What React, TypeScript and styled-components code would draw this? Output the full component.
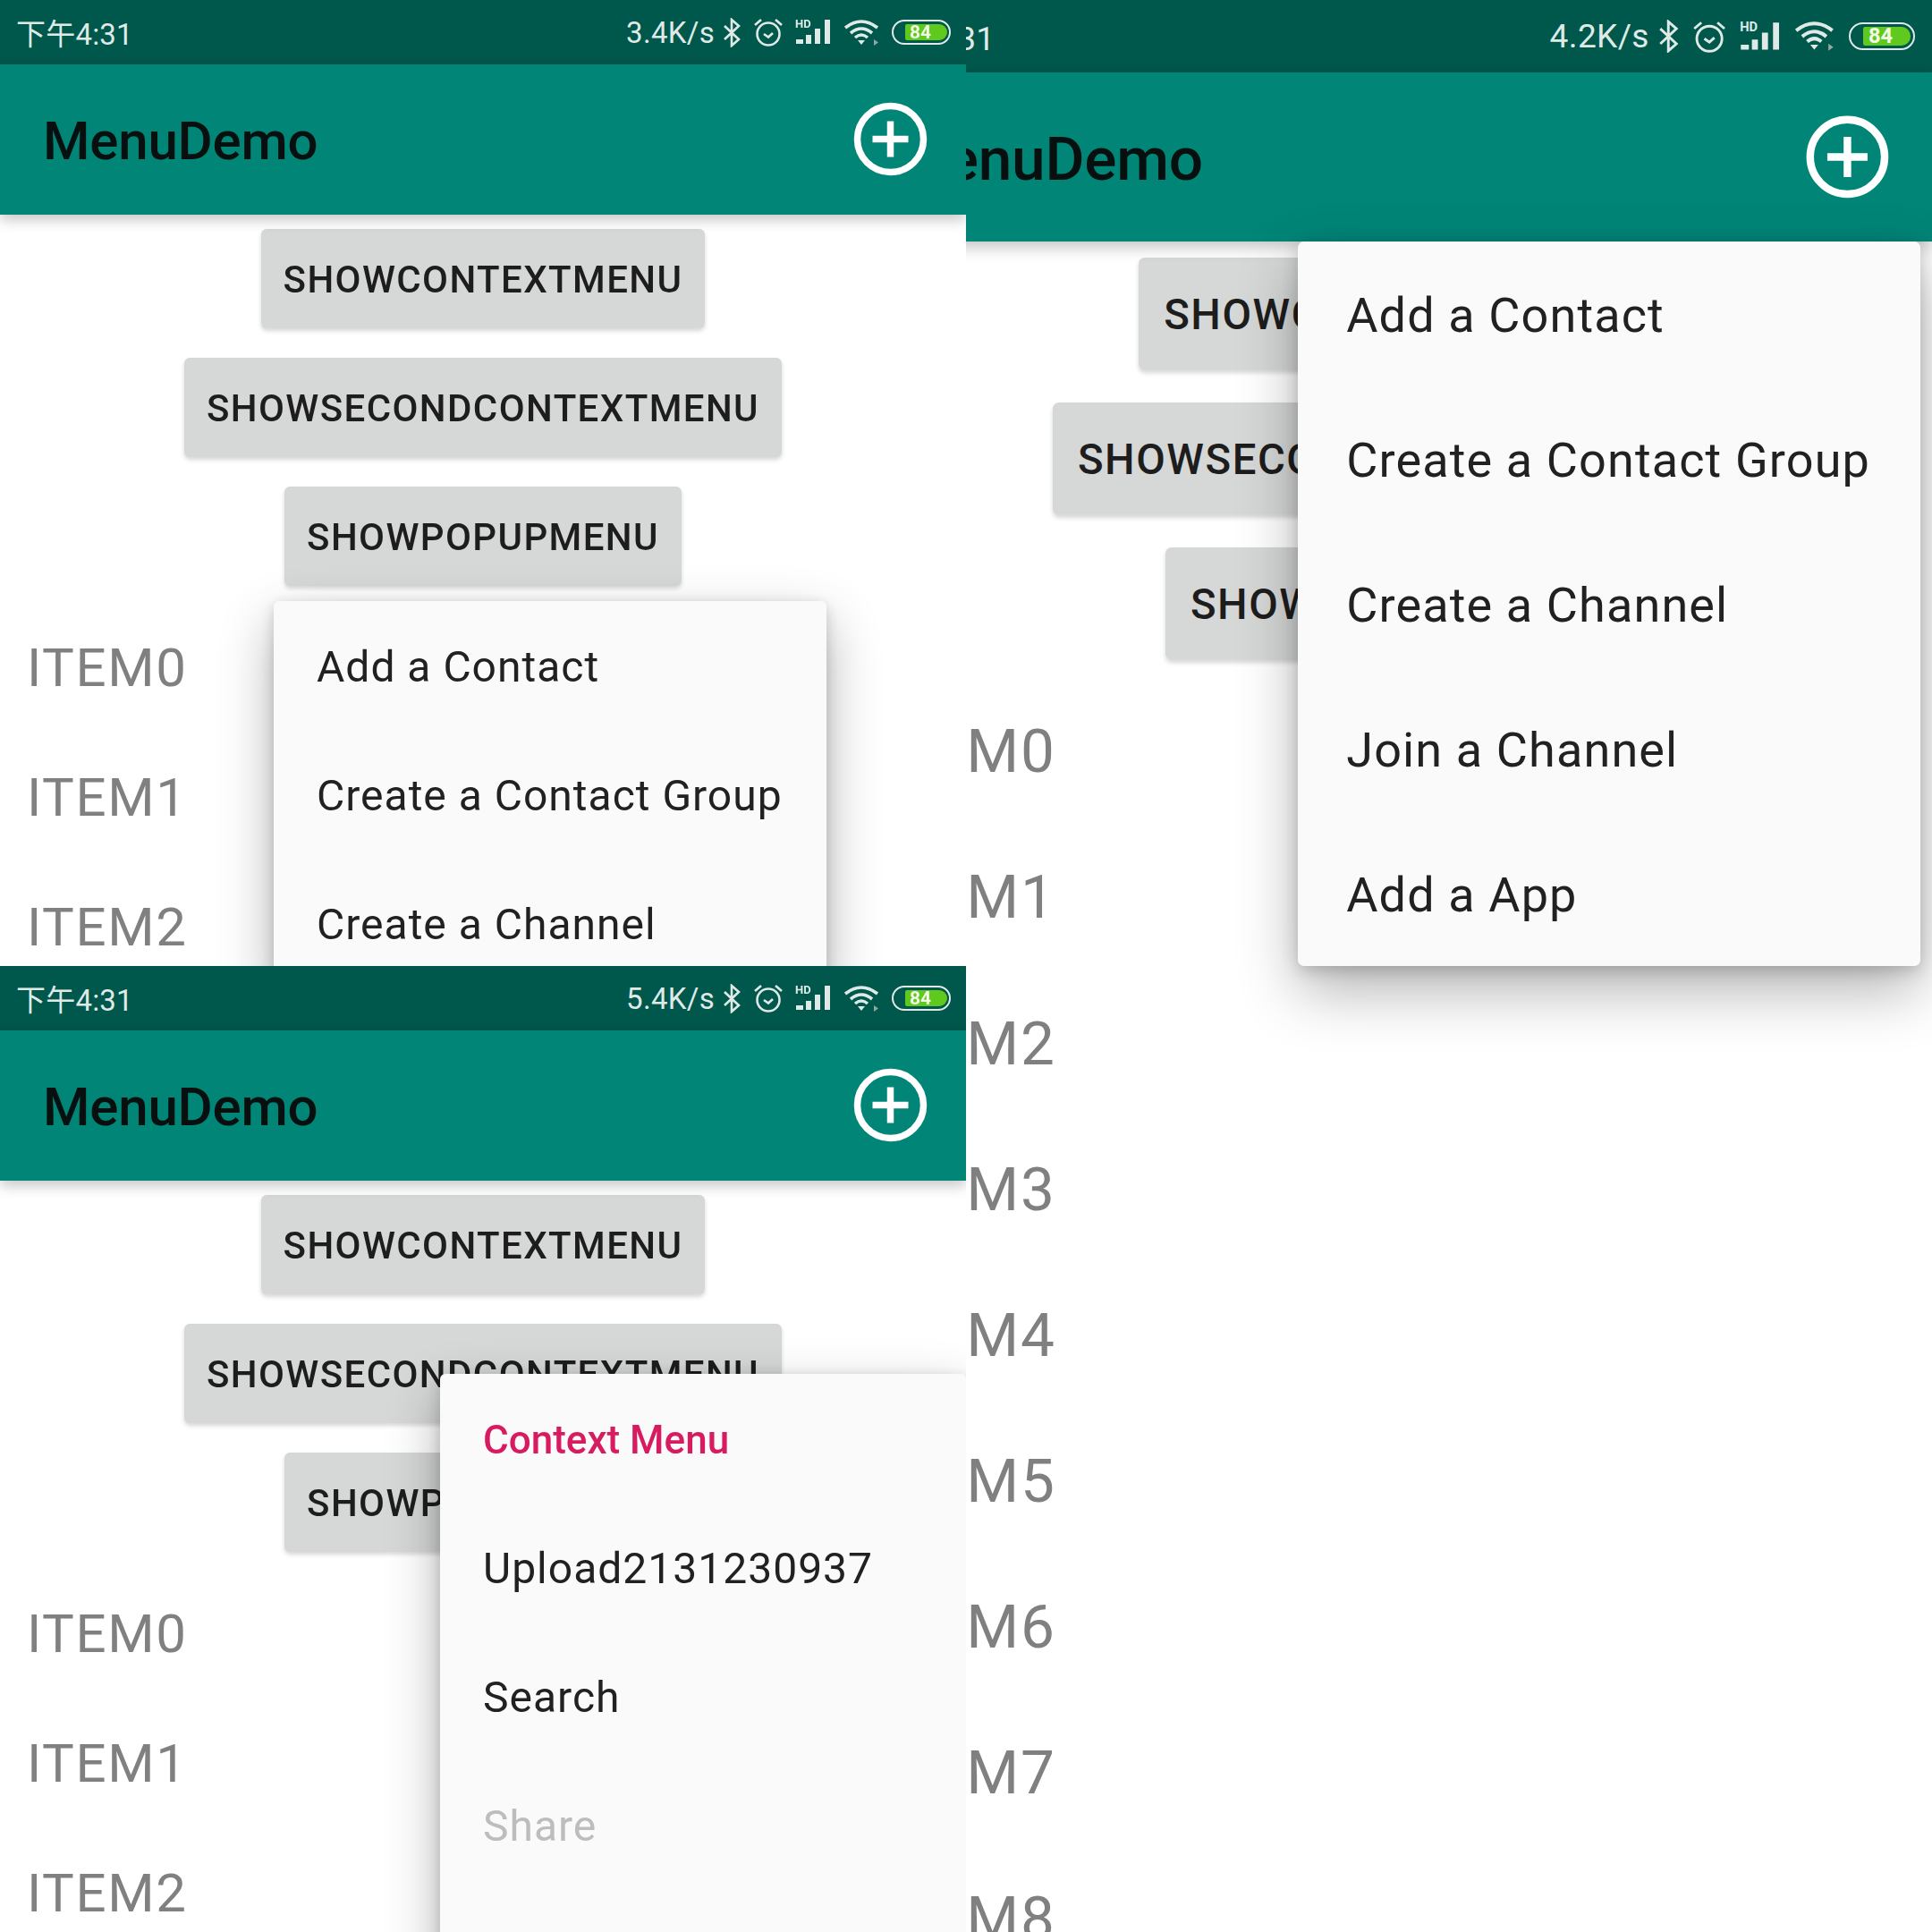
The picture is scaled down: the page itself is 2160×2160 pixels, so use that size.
import * as React from 'react';
import styled, { createGlobalStyle } from 'styled-components';

const GlobalStyle = createGlobalStyle`
  html, body {
    margin: 0;
    padding: 0;
    background: #fff;
  }
  * {
    box-sizing: border-box;
  }
`;

const Collage = styled.div`
  display: grid;
  grid-template-columns: 1080px 1080px;
  grid-template-rows: 1080px 1080px;
  width: 2160px;
  height: 2160px;
  overflow: hidden;
  font-family: Roboto, "Noto Sans CJK SC", sans-serif;
  filter: blur(0.6px);
`;

const Shot = styled.div<{ $tall?: boolean }>`
  overflow: hidden;
  background: #fff;
  grid-row: ${(p) => (p.$tall ? '1 / span 2' : 'auto')};
  grid-column: ${(p) => (p.$tall ? '2' : '1')};
`;

const Phone = styled.div<{ $enlarged?: boolean }>`
  position: relative;
  width: 1080px;
  height: 1920px;
  background: #fff;
  zoom: ${(p) => (p.$enlarged ? 1.125 : 1)};
  margin-left: ${(p) => (p.$enlarged ? '-120px' : '0')};
`;

const StatusBar = styled.div`
  display: flex;
  align-items: center;
  justify-content: space-between;
  height: 72px;
  padding: 0 17px 0 18px;
  background: #00574b;
  color: #dfeae7;
`;

const Clock = styled.span`
  font-size: 33px;
  margin-top: -1px;
  letter-spacing: 0.2px;
`;

const StatusGroup = styled.div`
  display: flex;
  align-items: center;
`;

const Speed = styled.span`
  font-size: 33px;
  letter-spacing: 0.3px;
`;

const Glyph = styled.svg<{ $gap: number }>`
  display: block;
  margin-left: ${(p) => p.$gap}px;
  fill: none;
  stroke: #dfeae7;
  stroke-width: 2.6;
`;

const Battery = styled.div`
  display: flex;
  align-items: center;
  width: 66px;
  height: 28px;
  margin-left: 12px;
  padding-left: 13px;
  border: 2.5px solid #dfeae7;
  border-radius: 14px;
`;

const BatteryFill = styled.div`
  width: 47px;
  height: 18px;
  padding-left: 5px;
  border-radius: 2px 9px 9px 2px;
  background: #5fc91e;
  color: #f2f9e6;
  font-size: 21px;
  font-weight: 700;
  line-height: 18px;
`;

const AppBar = styled.div`
  position: relative;
  z-index: 1;
  display: flex;
  align-items: center;
  justify-content: space-between;
  height: 168px;
  padding: 0 44px 0 48px;
  background: #008577;
  box-shadow: 0 6px 14px rgba(0, 0, 0, 0.22);
`;

const Title = styled.span`
  margin-top: 3px;
  color: #07100f;
  font-size: 60px;
  font-weight: 500;
  letter-spacing: -0.2px;
`;

const Actions = styled.div`
  display: flex;
  flex-direction: column;
  align-items: center;
  gap: 33px;
  padding-top: 16px;
`;

const Action = styled.div`
  display: flex;
  align-items: center;
  height: 111px;
  padding: 2px 25px 0;
  border-radius: 6px;
  background: #d6d7d7;
  box-shadow: 0 3px 5px rgba(0, 0, 0, 0.16);
  color: #1d1d1d;
  font-size: 42px;
  font-weight: 500;
  letter-spacing: 1.4px;
`;

const List = styled.div`
  padding-top: 19px;
`;

const Row = styled.div`
  display: flex;
  align-items: center;
  height: 145px;
  padding-left: 30px;
  color: #808080;
  font-size: 60px;
  letter-spacing: 1.6px;
`;

const Menu = styled.div<{ $left: number; $top: number; $width: number; $tall?: boolean }>`
  position: absolute;
  z-index: 2;
  left: ${(p) => p.$left}px;
  top: ${(p) => p.$top}px;
  width: ${(p) => p.$width}px;
  min-height: ${(p) => (p.$tall ? '720px' : '0')};
  border-radius: 6px;
  background: #fafafa;
  box-shadow: 0 24px 60px rgba(0, 0, 0, 0.3), 0 4px 16px rgba(0, 0, 0, 0.18);
`;

const MenuItem = styled.div<{ $kind?: 'header' | 'disabled' }>`
  display: flex;
  align-items: center;
  height: 144px;
  padding: 3px 0 0 48px;
  color: ${(p) => (p.$kind === 'header' ? '#d81b60' : p.$kind === 'disabled' ? '#bdbdbd' : '#212121')};
  font-size: ${(p) => (p.$kind === 'header' ? '44px' : '48px')};
  font-weight: ${(p) => (p.$kind === 'header' ? 500 : 400)};
  letter-spacing: ${(p) => (p.$kind === 'header' ? '0' : '1px')};
`;

const HdLabel = styled.text`
  fill: #dfeae7;
  stroke: none;
  font-size: 13px;
  font-weight: 700;
  font-family: Roboto, sans-serif;
`;

function StatusIcons() {
  return (
    <>
      <Glyph $gap={9} width="20" height="33" viewBox="0 0 20 33">
        <polyline points="2,9 18,24 10,31 10,2 18,9 2,24" />
      </Glyph>
      <Glyph $gap={14} width="34" height="32" viewBox="0 0 34 32">
        <circle cx="17" cy="18" r="12.5" />
        <path d="M2 8L9 2M25 2l7 6M12 18l5 3.500 5-4.500" />
      </Glyph>
      <Glyph $gap={12} width="40" height="30" viewBox="0 0 40 30">
        <HdLabel x="1" y="10">HD</HdLabel>
        <path
          d="M2 23h8v5H2zM13 18h6v10h-6zM23 11h6v17h-6zM34 1h6v27h-6z"
          fill="#dfeae7"
          stroke="none"
        />
      </Glyph>
      <Glyph $gap={16} width="41" height="29" viewBox="0 0 41 29">
        <path d="M1 9Q19-5 37 9M7 15Q19 5 31 15M12 20Q19 14 26 20" strokeWidth="3.6" />
        <path d="M15 23h8l-4 5z" fill="#dfeae7" stroke="none" />
        <path d="M33 22v7l5-3.500z" fill="#8fa8a2" stroke="none" />
      </Glyph>
      <Battery>
        <BatteryFill>84</BatteryFill>
      </Battery>
    </>
  );
}

function AddIcon() {
  return (
    <svg width="80" height="80" viewBox="0 0 80 80" fill="none" stroke="#fff" strokeWidth="7.5" overflow="visible">
      <circle cx="39.500" cy="39.500" r="37" />
      <path d="M19.500 39.500h40M39.500 19.500v40" />
    </svg>
  );
}

interface ScreenProps {
  speed: string
  enlarged?: boolean
  rows: number
  children: React.ReactNode
}

function Screen(props: ScreenProps) {
  return (
    <Phone $enlarged={props.enlarged}>
      <StatusBar>
        <Clock>下午4:31</Clock>
        <StatusGroup>
          <Speed>{props.speed}</Speed>
          <StatusIcons />
        </StatusGroup>
      </StatusBar>
      <AppBar>
        <Title>MenuDemo</Title>
        <AddIcon />
      </AppBar>
      <Actions>
        <Action>SHOWCONTEXTMENU</Action>
        <Action>SHOWSECONDCONTEXTMENU</Action>
        <Action>SHOWPOPUPMENU</Action>
      </Actions>
      <List>
        {Array.from({ length: props.rows }, (_, i) => (
          <Row key={i}>ITEM{i}</Row>
        ))}
      </List>
      {props.children}
    </Phone>
  );
}

export default function App() {
  return (
    <>
      <GlobalStyle />
      <Collage>
        <Shot>
          <Screen speed="3.4K/s" rows={3}>
            <Menu $left={306} $top={672} $width={618}>
              <MenuItem>Add a Contact</MenuItem>
              <MenuItem>Create a Contact Group</MenuItem>
              <MenuItem>Create a Channel</MenuItem>
            </Menu>
          </Screen>
        </Shot>
        <Shot $tall>
          <Screen speed="4.2K/s" rows={9} enlarged>
            <Menu $left={450} $top={240} $width={618}>
              <MenuItem>Add a Contact</MenuItem>
              <MenuItem>Create a Contact Group</MenuItem>
              <MenuItem>Create a Channel</MenuItem>
              <MenuItem>Join a Channel</MenuItem>
              <MenuItem>Add a App</MenuItem>
            </Menu>
          </Screen>
        </Shot>
        <Shot>
          <Screen speed="5.4K/s" rows={3}>
            <Menu $left={492} $top={456} $width={588} $tall>
              <MenuItem $kind="header">Context Menu</MenuItem>
              <MenuItem>Upload2131230937</MenuItem>
              <MenuItem>Search</MenuItem>
              <MenuItem $kind="disabled">Share</MenuItem>
            </Menu>
          </Screen>
        </Shot>
      </Collage>
    </>
  );
}
